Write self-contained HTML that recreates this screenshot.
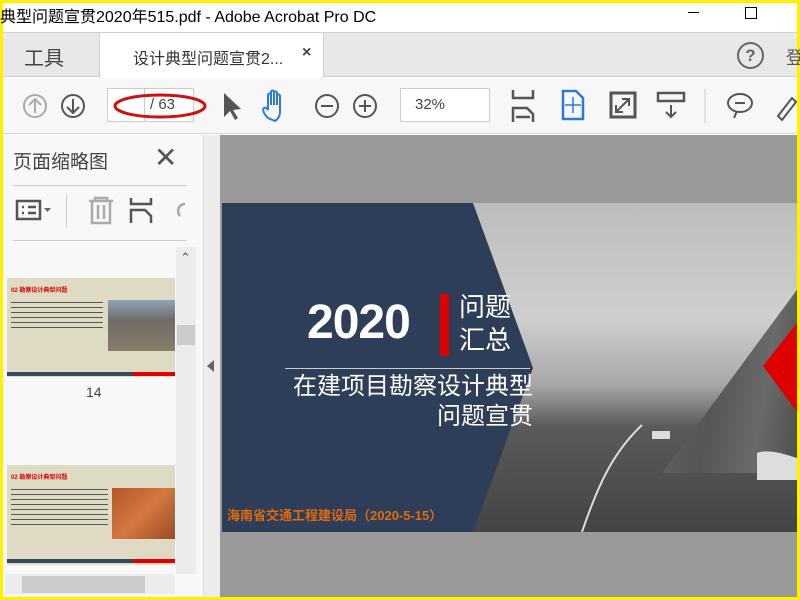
<!DOCTYPE html>
<html><head><meta charset="utf-8"><style>
*{margin:0;padding:0;box-sizing:border-box}
body{width:800px;height:600px;overflow:hidden;background:#ffef00;font-family:"Liberation Sans","Noto Sans CJK SC",sans-serif;position:relative}
.a{position:absolute}
</style></head><body>
<div class="a" style="left:3px;top:3px;width:794px;height:594px;background:#fff"></div>
<div class="a" style="left:0;top:3px;font-size:16px;color:#000;white-space:nowrap">典型问题宣贯2020年515.pdf - Adobe Acrobat Pro DC</div>
<div class="a" style="left:688px;top:12px;width:11px;height:1px;background:#000"></div>
<div class="a" style="left:745px;top:7px;width:12px;height:12px;border:1px solid #000"></div>
<!-- tab bar -->
<div class="a" style="left:3px;top:32px;width:794px;height:45px;background:#e8e8e8;border-top:1px solid #d0d0d0;border-bottom:1px solid #d0d0d0"></div>
<div class="a" style="left:24px;top:42px;font-size:20px;color:#444">工具</div>
<div class="a" style="left:99px;top:33px;width:225px;height:45px;background:#fff;border-left:1px solid #d0d0d0;border-right:1px solid #d0d0d0"></div>
<div class="a" style="left:133px;top:45px;font-size:16px;color:#333;white-space:nowrap">设计典型问题宣贯2...</div>
<div class="a" style="left:302px;top:44px;font-size:16px;color:#444;font-weight:bold">×</div>
<div class="a" style="left:737px;top:42px;width:27px;height:27px;border:2px solid #666;border-radius:50%;text-align:center;font-size:17px;line-height:23px;color:#666;font-weight:bold">?</div>
<div class="a" style="left:786px;top:44px;font-size:18px;color:#555">登</div>
<!-- toolbar -->
<div class="a" style="left:3px;top:78px;width:794px;height:56px;background:#f7f7f7;border-bottom:1px solid #d6d6d6"></div>
<svg class="a" style="left:0;top:78px" width="800" height="56">
<g fill="none" stroke-width="2">
<circle cx="35" cy="28" r="11" stroke="#aaa"/><path d="M35 35V21M29 27l6-6 6 6" stroke="#aaa"/>
<circle cx="73" cy="28" r="11" stroke="#555"/><path d="M73 21v14M67 29l6 6 6-6" stroke="#555"/>
<circle cx="327" cy="28" r="11" stroke="#555"/><path d="M321 28h12" stroke="#555"/>
<circle cx="365" cy="28" r="11" stroke="#555"/><path d="M359 28h12M365 22v12" stroke="#555"/>
<path d="M513 12v8h20v-8M513 44v-14h14l6 6v8M516 39h14" stroke="#555" stroke-width="2.5"/>
<path d="M563 13h13l7 7v21h-20z" stroke="#2d7ad6" stroke-width="2.5"/><path d="M573 19v16M565 27h16" stroke="#2d7ad6" stroke-width="1.5"/>
<rect x="611" y="15" width="24" height="24" stroke="#555" stroke-width="3"/><path d="M616 34l13-13M622 21h7v7M616 27v7h7" stroke="#555"/>
<rect x="658" y="15" width="26" height="8" stroke="#555" stroke-width="2.5"/><path d="M671 27v12M666 34l5 5 5-5" stroke="#555"/>
<path d="M705 11v34" stroke="#ccc" stroke-width="1"/>
<ellipse cx="740" cy="25" rx="12" ry="9" stroke="#555"/><path d="M734 40l3-7M735 25h10" stroke="#555"/>
<path d="M778 38l14-18 4 4-14 18z" stroke="#555"/>
</g>
<path d="M224 15v24l6-6 5 9 3-2-5-8 8-1z" fill="#555"/>
<path d="M268 40c-4-4-6-8-4-10 1-1 3 0 4 2v-15c0-2 3-2 3 0v10-13c0-2 3-2 3 0v13-12c0-2 3-2 3 0v12-9c0-2 3-2 3 0v16c0 4-2 7-5 9z" fill="none" stroke="#2d7ad6" stroke-width="2"/>
<path d="M472 23h8l-4 4z" fill="#666"/>
</svg>
<div class="a" style="left:107px;top:88px;width:87px;height:34px;border:1px solid #ccc;background:#fff"></div>
<div class="a" style="left:144px;top:88px;width:1px;height:34px;background:#ccc"></div>
<div class="a" style="left:150px;top:96px;font-size:15px;color:#444">/ 63</div>
<svg class="a" style="left:112px;top:86px" width="100" height="40"><ellipse cx="48" cy="20" rx="45" ry="11" fill="none" stroke="#c11" stroke-width="3"/></svg>
<div class="a" style="left:400px;top:88px;width:90px;height:34px;border:1px solid #ccc;background:#fff"></div>
<div class="a" style="left:415px;top:96px;font-size:15px;color:#444">32%</div>
<!-- left panel -->
<div class="a" style="left:3px;top:135px;width:200px;height:462px;background:#f8f8f8"></div>
<div class="a" style="left:13px;top:147px;font-size:19px;color:#444">页面缩略图</div>
<div class="a" style="left:154px;top:141px;font-size:28px;color:#555">✕</div>
<div class="a" style="left:13px;top:185px;width:174px;height:1px;background:#ccc"></div>
<div class="a" style="left:13px;top:240px;width:174px;height:1px;background:#ccc"></div>
<div class="a" style="left:66px;top:194px;width:1px;height:34px;background:#ccc"></div>
<svg class="a" style="left:0;top:190px" width="200" height="50"><g fill="none" stroke-width="2.5">
<rect x="17" y="11" width="23" height="18" stroke="#555"/><path d="M22 17h2M22 23h2M28 17h8M28 23h8" stroke="#555"/>
<path d="M89 11h24M95 11v-3h12v3M92 11v22h18V11M98 15v14M104 15v14" stroke="#aaa"/>
<path d="M131 8v6h20v-6M131 33v-13h14l6 6v7" stroke="#555"/>
<path d="M185 14c-6 0-9 7-5 12" stroke="#aaa"/></g>
<path d="M44 18h7l-3.5 4z" fill="#666"/></svg>
<div class="a" style="left:176px;top:247px;width:20px;height:327px;background:#ececec"></div>
<div class="a" style="left:177px;top:325px;width:18px;height:20px;background:#ccc"></div>
<div class="a" style="left:180px;top:250px;font-size:13px;color:#555">⌃</div>
<div class="a" style="left:5px;top:574px;width:170px;height:20px;background:#ececec"></div>
<div class="a" style="left:22px;top:576px;width:123px;height:17px;background:#ccc"></div>
<!-- thumbs -->
<div class="a" style="left:7px;top:278px;width:168px;height:99px;background:#dedac4"></div>
<div class="a" style="left:11px;top:285px;font-size:6px;color:#d00;font-weight:bold">02 勘察设计典型问题</div>
<div class="a" style="left:108px;top:300px;width:67px;height:51px;background:linear-gradient(#8fa3b9,#6e6c67 40%,#8a7c6a)"></div>
<div class="a" style="left:11px;top:300px;width:92px;height:30px;background:repeating-linear-gradient(#dedac4 0 2px,#555 2px 3px,#dedac4 3px 5px)"></div>
<div class="a" style="left:7px;top:372px;width:126px;height:4px;background:#34495e"></div>
<div class="a" style="left:133px;top:372px;width:42px;height:4px;background:#d00"></div>
<div class="a" style="left:86px;top:384px;font-size:14px;color:#444">14</div>
<div class="a" style="left:7px;top:465px;width:168px;height:100px;background:#dedac4"></div>
<div class="a" style="left:11px;top:472px;font-size:6px;color:#d00;font-weight:bold">02 勘察设计典型问题</div>
<div class="a" style="left:112px;top:488px;width:63px;height:51px;background:linear-gradient(135deg,#b5582c,#d2783f,#9b4b25)"></div>
<div class="a" style="left:11px;top:487px;width:97px;height:40px;background:repeating-linear-gradient(#dedac4 0 2px,#555 2px 3px,#dedac4 3px 5px)"></div>
<div class="a" style="left:7px;top:559px;width:126px;height:4px;background:#34495e"></div>
<div class="a" style="left:133px;top:559px;width:42px;height:4px;background:#d00"></div>
<!-- splitter -->
<div class="a" style="left:203px;top:135px;width:17px;height:462px;background:#ececec;border-left:1px solid #ddd"></div>
<div class="a" style="left:207px;top:360px;width:0;height:0;border-top:6px solid transparent;border-bottom:6px solid transparent;border-right:7px solid #666"></div>
<!-- document -->
<div class="a" style="left:220px;top:135px;width:577px;height:462px;background:#9a9a9a"></div>
<div class="a" style="left:222px;top:203px;width:575px;height:329px;background:linear-gradient(180deg,#bdbdbd 0%,#cfcfcf 35%,#a8a8a8 55%,#5a5a5a 68%,#444 100%);overflow:hidden">
 <div class="a" style="left:440px;top:80px;width:140px;height:190px;background:linear-gradient(100deg,#666,#555 40%,#6a6a6a 70%,#4a4a4a);clip-path:polygon(40% 60%,100% 0,100% 100%,0 100%)"></div>
 <svg class="a" style="left:0;top:0" width="575" height="329">
  <path d="M360 329 C375 285 390 250 420 222" stroke="#ddd" stroke-width="2" fill="none"/>
  <path d="M535 250c10-4 25 0 40 5v22h-40z" fill="#ddd"/>
  <path d="M430 228h18v8h-18z" fill="#ddd"/>
  <path d="M0 0H251L311 165L251 329H0Z" fill="#2e3e58"/>
  <path d="M541 163L575 120V209Z" fill="#d00"/>
 </svg>
</div>
<div class="a" style="left:307px;top:293px;font-size:48px;color:#fff;font-weight:bold;line-height:60px;letter-spacing:-1px">2020</div>
<div class="a" style="left:440px;top:294px;width:9px;height:62px;background:#d00"></div>
<div class="a" style="left:459px;top:291px;font-size:26px;color:#fff;line-height:33px">问题<br>汇总</div>
<div class="a" style="left:285px;top:368px;width:245px;height:1px;background:#ccc"></div>
<div class="a" style="left:280px;top:372px;font-size:24px;color:#fff;line-height:30px;text-align:right;width:253px">在建项目勘察设计典型<br>问题宣贯</div>
<div class="a" style="left:227px;top:505px;font-size:13px;color:#e06a10;font-weight:bold;white-space:nowrap">海南省交通工程建设局（2020-5-15）</div>
</body></html>
